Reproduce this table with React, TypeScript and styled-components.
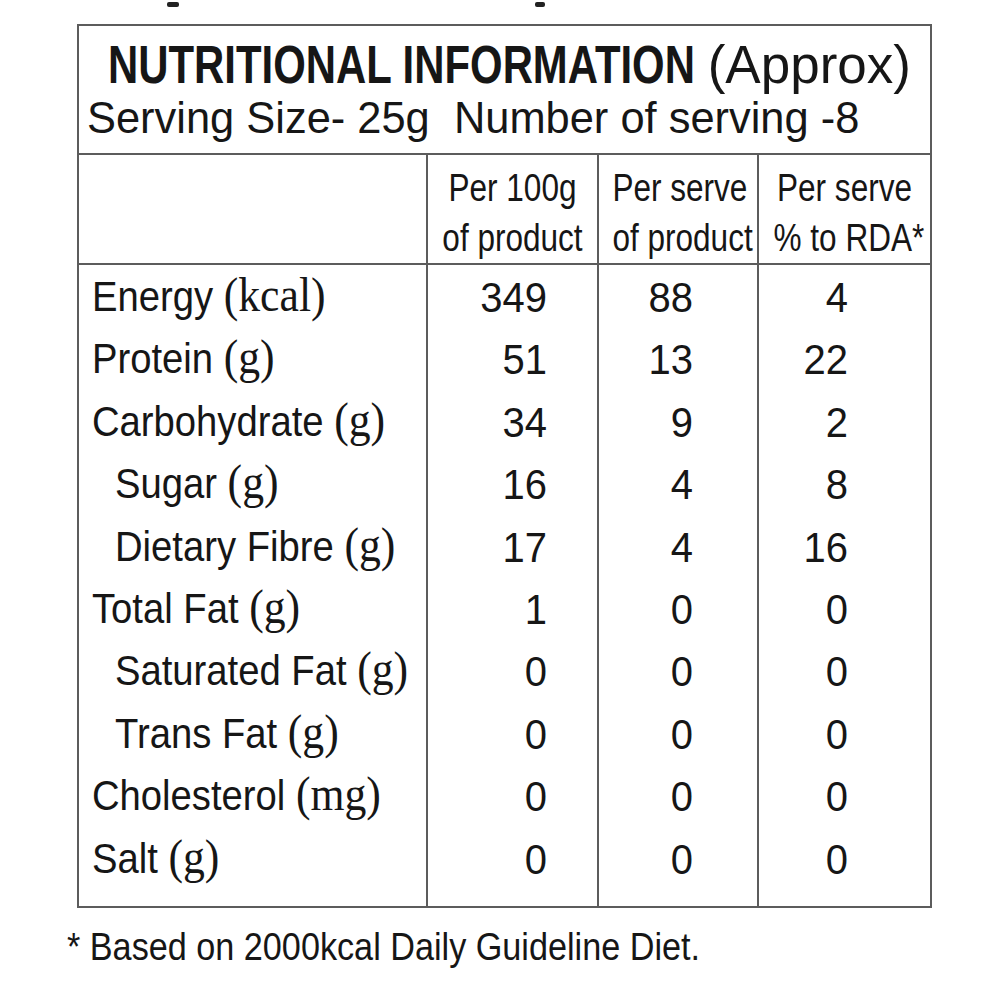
import React from 'react';
import styled, { createGlobalStyle } from 'styled-components';

const Global = createGlobalStyle`
  html, body { margin: 0; padding: 0; background: #ffffff; }
  body {
    font-family: "Liberation Sans", Arial, sans-serif;
    color: #161616;
  }
`;

const LINE = '2px solid #5c5c5c';

const Page = styled.div`
  width: 1000px;
  height: 1000px;
  box-sizing: border-box;
  padding-left: 67px;
  background: #fff;
  overflow: hidden;
`;

const TopStrip = styled.div`
  height: 24px;
  display: flex;
  align-items: flex-start;
`;

const Mark = styled.span<{ $left: number; $w: number }>`
  display: block;
  margin-left: ${(p) => p.$left}px;
  margin-top: 2px;
  width: ${(p) => p.$w}px;
  height: 5px;
  background: #222;
  border-radius: 2px;
`;

/* narrow lettering: the label's type is a condensed grotesque */
const Narrow = styled.div<{ $k: number; $origin?: string }>`
  white-space: nowrap;
  transform: scaleX(${(p) => p.$k});
  transform-origin: ${(p) => p.$origin ?? 'left'} center;
`;

const Table = styled.table`
  margin-left: 10px;
  border-collapse: collapse;
  table-layout: fixed;
  width: 853px;
  border: ${LINE};
`;

const TitleCell = styled.td`
  height: 127px;
  padding: 0;
  vertical-align: top;
  border-bottom: ${LINE};
`;

const Title = styled.div`
  padding: 11px 0 0 29px;
  font-size: 53px;
  line-height: 56px;
  white-space: nowrap;
`;

const Bold = styled.span`
  display: inline-block;
  vertical-align: top;
  width: 585px;
  font-weight: 700;
  transform: scaleX(0.79);
  transform-origin: left center;
`;

const Serving = styled.div`
  padding-left: 8px;
  font-size: 45px;
  line-height: 50px;
  white-space: nowrap;
`;

const HeadCell = styled.td<{ $line?: boolean }>`
  height: 96px;
  padding: 8px 0 0 0;
  text-align: center;
  vertical-align: middle;
  font-size: 38px;
  line-height: 50px;
  white-space: nowrap;
  border-bottom: ${LINE};
  border-left: ${(p) => (p.$line ? LINE : 'none')};
`;

const Label = styled.td<{ $indent?: boolean; $last?: boolean }>`
  height: ${(p) => (p.$last ? 75 : 58.4)}px;
  padding: 4px 0 0 ${(p) => (p.$indent ? 36 : 13)}px;
  vertical-align: top;
  font-size: 42px;
  line-height: 56px;
  white-space: nowrap;
`;

const Unit = styled.span`
  font-family: "Liberation Serif", "Times New Roman", serif;
  font-size: 48px;
  line-height: 0;
`;

const Num = styled.td<{ $pad: number }>`
  padding: 4px ${(p) => p.$pad}px 0 0;
  vertical-align: top;
  text-align: right;
  font-size: 43px;
  line-height: 56px;
  border-left: ${LINE};
`;

const Footnote = styled.div`
  margin-top: 17px;
  font-size: 38px;
  line-height: 44px;
  white-space: nowrap;
`;

type Row = { name: string; unit: string; indent?: boolean; v: [string, string, string] };

const rows: Row[] = [
  { name: 'Energy', unit: '(kcal)', v: ['349', '88', '4'] },
  { name: 'Protein', unit: '(g)', v: ['51', '13', '22'] },
  { name: 'Carbohydrate', unit: '(g)', v: ['34', '9', '2'] },
  { name: 'Sugar', unit: '(g)', indent: true, v: ['16', '4', '8'] },
  { name: 'Dietary Fibre', unit: '(g)', indent: true, v: ['17', '4', '16'] },
  { name: 'Total Fat', unit: '(g)', v: ['1', '0', '0'] },
  { name: 'Saturated Fat', unit: '(g)', indent: true, v: ['0', '0', '0'] },
  { name: 'Trans Fat', unit: '(g)', indent: true, v: ['0', '0', '0'] },
  { name: 'Cholesterol', unit: '(mg)', v: ['0', '0', '0'] },
  { name: 'Salt', unit: '(g)', v: ['0', '0', '0'] },
];

const pads = [50, 64, 82];

export default function App() {
  return (
    <Page>
      <Global />
      <TopStrip>
        <Mark $left={100} $w={12} />
        <Mark $left={356} $w={10} />
      </TopStrip>
      <Table>
        <colgroup>
          <col style={{ width: 349 }} />
          <col style={{ width: 171 }} />
          <col style={{ width: 160 }} />
          <col style={{ width: 173 }} />
        </colgroup>
        <tbody>
          <tr>
            <TitleCell colSpan={4}>
              <Title>
                <Bold>NUTRITIONAL INFORMATION</Bold> (Approx)
              </Title>
              <Serving>
                <Narrow $k={0.965}>Serving Size- 25g&nbsp; Number of serving -8</Narrow>
              </Serving>
            </TitleCell>
          </tr>
          <tr>
            <HeadCell />
            <HeadCell $line>
              <Narrow $k={0.83} $origin="center">
                Per 100g
                <br />
                of product
              </Narrow>
            </HeadCell>
            <HeadCell $line>
              <Narrow $k={0.83} $origin="center">
                Per serve
                <br />
                of product
              </Narrow>
            </HeadCell>
            <HeadCell $line>
              <Narrow $k={0.83} $origin="center">
                Per serve
                <br />% to RDA*
              </Narrow>
            </HeadCell>
          </tr>
          {rows.map((r, i) => (
            <tr key={r.name}>
              <Label $indent={r.indent} $last={i === rows.length - 1}>
                <Narrow $k={0.91}>
                  {r.name} <Unit>{r.unit}</Unit>
                </Narrow>
              </Label>
              {r.v.map((val, j) => (
                <Num key={j} $pad={pads[j]}>
                  <Narrow $k={0.93} $origin="right">
                    {val}
                  </Narrow>
                </Num>
              ))}
            </tr>
          ))}
        </tbody>
      </Table>
      <Footnote>
        <Narrow $k={0.9}>* Based on 2000kcal Daily Guideline Diet.</Narrow>
      </Footnote>
    </Page>
  );
}
